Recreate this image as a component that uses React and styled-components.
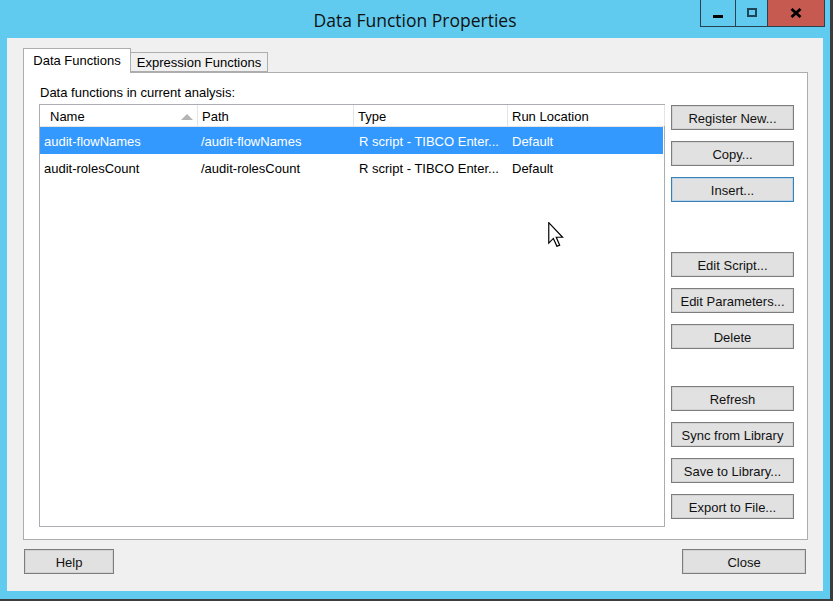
import React from "react";
import styled, { createGlobalStyle } from "styled-components";

const GlobalStyle = createGlobalStyle`
  html, body { margin: 0; padding: 0; background: #3d3d3d; }
  body { font-family: "Liberation Sans", Arial, sans-serif; font-size: 13px; color: #000; }
  * { box-sizing: border-box; }
`;

const Window = styled.div`
  position: relative;
  width: 830px;
  height: 599px;
  background: #60cbef;
  display: flex;
  flex-direction: column;
`;

const TitleBar = styled.div`
  height: 38px;
  flex: none;
  display: grid;
  grid-template-columns: 1fr auto 1fr;
  align-items: start;
`;

const Title = styled.div`
  grid-column: 2;
  align-self: center;
  font-family: "Open Sans", "Liberation Sans", sans-serif;
  font-size: 17.5px;
  color: #111;
  white-space: nowrap;
  padding-top: 1px;
`;

const Controls = styled.div`
  grid-column: 3;
  justify-self: end;
  display: flex;
  margin-right: 5px;
`;

const CtrlButton = styled.div`
  width: ${(p) => p.$w}px;
  height: 27px;
  margin-left: -1px;
  border: 1px solid #2c4150;
  border-top: none;
  background: ${(p) => p.$bg};
  display: flex;
  align-items: center;
  justify-content: center;
`;

const MinGlyph = styled.div`
  width: 10px;
  height: 3px;
  background: #000;
  margin-top: 7px;
`;

const MaxGlyph = styled.div`
  width: 10px;
  height: 9px;
  border: 2px solid #1f4458;
  margin-top: -1px;
`;

const Client = styled.div`
  flex: 1;
  margin: 0 7px 8px 7px;
  background: #f0f0f0;
  display: flex;
  flex-direction: column;
  padding: 10px 15px 0 16px;
`;

const TabStrip = styled.div`
  display: flex;
  align-items: flex-end;
  height: 25px;
  margin-bottom: -1px;
  position: relative;
  z-index: 1;
`;

const Tab = styled.div`
  width: ${(p) => p.$w}px;
  height: ${(p) => (p.$active ? 25 : 20)}px;
  margin-bottom: ${(p) => (p.$active ? 0 : 1)}px;
  margin-left: ${(p) => (p.$active ? 0 : -1)}px;
  border: 1px solid #adadad;
  border-bottom: ${(p) => (p.$active ? "none" : "1px solid #adadad")};
  background: ${(p) => (p.$active ? "#fff" : "#f0f0f0")};
  display: flex;
  align-items: center;
  justify-content: center;
  padding-bottom: ${(p) => (p.$active ? 2 : 0)}px;
  white-space: nowrap;
`;

const Panel = styled.div`
  height: 468px;
  flex: none;
  border: 1px solid #adadad;
  background: #fff;
  padding: 12px 13px 12px 15px;
  display: flex;
  flex-direction: column;
`;

const Caption = styled.div`
  line-height: 15px;
  margin-bottom: 4px;
  padding-left: 1px;
`;

const Content = styled.div`
  flex: 1;
  display: flex;
  gap: 6px;
  min-height: 0;
`;

const List = styled.div`
  width: 626px;
  border: 1px solid #abadb3;
  background: #fff;
  display: flex;
  flex-direction: column;
`;

const cols = "157px 156px 154px 1fr";

const HeaderRow = styled.div`
  display: grid;
  grid-template-columns: ${cols};
  height: 22px;
  border-bottom: 1px solid #e5e5e5;
`;

const HeaderCell = styled.div`
  position: relative;
  display: flex;
  align-items: center;
  padding-left: ${(p) => (p.$first ? 10 : 5)}px;
  padding-top: 2px;
  border-right: 1px solid #e5e5e5;
  margin-right: -1px;
`;

const SortArrow = styled.svg`
  position: absolute;
  right: 4px;
  top: 9px;
`;

const Row = styled.div`
  display: grid;
  grid-template-columns: ${cols};
  height: 27px;
  align-items: center;
  padding-top: 2px;
  background: ${(p) => (p.$selected ? "#3399ff" : "transparent")};
  color: ${(p) => (p.$selected ? "#fff" : "#000")};
  margin-right: 1px;
`;

const Cell = styled.div`
  padding-left: ${(p) => p.$pad}px;
  white-space: nowrap;
  overflow: hidden;
`;

const ButtonColumn = styled.div`
  width: 123px;
  display: flex;
  flex-direction: column;
`;

const ButtonGroup = styled.div`
  display: flex;
  flex-direction: column;
  gap: 11px;
  margin-top: ${(p) => p.$before}px;
`;

const Button = styled.div`
  width: ${(p) => p.$w || 123}px;
  height: 25px;
  background: #e1e1e1;
  border: 1px solid ${(p) => (p.$focused ? "#3c7fb1" : "#7d7d7d")};
  box-shadow: inset 0 0 0 1px ${(p) => (p.$focused ? "#b7d4ec" : "#d2d2d2")};
  display: flex;
  align-items: center;
  justify-content: center;
  padding-top: 1px;
  white-space: nowrap;
  color: #111;
`;

const Footer = styled.div`
  display: flex;
  justify-content: space-between;
  padding: 9px 2px 0 1px;
`;

const Cursor = styled.svg`
  position: absolute;
  left: 548px;
  top: 222px;
`;

const rows = [
  ["audit-flowNames", "/audit-flowNames", "R script - TIBCO Enter...", "Default"],
  ["audit-rolesCount", "/audit-rolesCount", "R script - TIBCO Enter...", "Default"],
];

const pads = [4, 4, 6, 5];

export default function App() {
  return (
    <>
      <GlobalStyle />
      <Window>
        <TitleBar>
          <Title>Data Function Properties</Title>
          <Controls>
            <CtrlButton $w={36} $bg="#60cbef">
              <MinGlyph />
            </CtrlButton>
            <CtrlButton $w={33} $bg="#60cbef">
              <MaxGlyph />
            </CtrlButton>
            <CtrlButton $w={58} $bg="#c75a50">
              <svg width="12" height="10" viewBox="0 0 12 10">
                <path d="M1.5 1 L10.5 9 M10.5 1 L1.5 9" stroke="#000" strokeWidth="2.8" />
              </svg>
            </CtrlButton>
          </Controls>
        </TitleBar>
        <Client>
          <TabStrip>
            <Tab $active $w={108}>Data Functions</Tab>
            <Tab $w={138}>Expression Functions</Tab>
          </TabStrip>
          <Panel>
            <Caption>Data functions in current analysis:</Caption>
            <Content>
              <List>
                <HeaderRow>
                  <HeaderCell $first>
                    Name
                    <SortArrow width="12" height="6" viewBox="0 0 12 6">
                      <path d="M0 6 L6 0 L12 6 Z" fill="#b4b4b4" />
                    </SortArrow>
                  </HeaderCell>
                  <HeaderCell>Path</HeaderCell>
                  <HeaderCell>Type</HeaderCell>
                  <HeaderCell>Run Location</HeaderCell>
                </HeaderRow>
                {rows.map((r, i) => (
                  <Row key={r[0]} $selected={i === 0}>
                    {r.map((c, j) => (
                      <Cell key={j} $pad={pads[j]}>
                        {c}
                      </Cell>
                    ))}
                  </Row>
                ))}
              </List>
              <ButtonColumn>
                <ButtonGroup $before={1}>
                  <Button>Register New...</Button>
                  <Button>Copy...</Button>
                  <Button $focused>Insert...</Button>
                </ButtonGroup>
                <ButtonGroup $before={50}>
                  <Button>Edit Script...</Button>
                  <Button>Edit Parameters...</Button>
                  <Button>Delete</Button>
                </ButtonGroup>
                <ButtonGroup $before={37}>
                  <Button>Refresh</Button>
                  <Button>Sync from Library</Button>
                  <Button>Save to Library...</Button>
                  <Button>Export to File...</Button>
                </ButtonGroup>
              </ButtonColumn>
            </Content>
          </Panel>
          <Footer>
            <Button $w={90}>Help</Button>
            <Button $w={124}>Close</Button>
          </Footer>
        </Client>
        <Cursor width="16" height="25" viewBox="0 0 12 19">
          <path
            d="M0.5 0.5 L0.5 16 L4 12.5 L6.7 18.5 L8.8 17.6 L6.2 11.6 L11 11.6 Z"
            fill="#fff"
            stroke="#000"
            strokeWidth="0.9"
            strokeLinejoin="miter"
          />
        </Cursor>
      </Window>
    </>
  );
}
